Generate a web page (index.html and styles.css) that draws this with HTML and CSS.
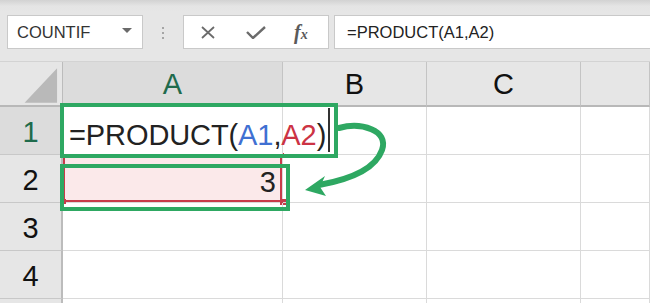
FILE: index.html
```html
<html>
<head>
    <title>PRODUCT</title>
    <link rel="stylesheet" href="styles.css">
</head>
<body>
    <div class="toolbar">
        <div class="namebox">
            <span>COUNTIF</span>
            <span class="caret"></span>
        </div>
        <div class="grip"><i></i><i></i><i></i></div>
        <div class="btnbox">
            <svg class="ico" width="16" height="13" viewBox="0 0 16 13">
                <path d="M2 1 L14 12 M14 1 L2 12" stroke="#6b6b6b" stroke-width="1.8" fill="none"/>
            </svg>
            <svg class="ico" width="20" height="13" viewBox="0 0 20 13">
                <path d="M1 6 L7 12 L19 1" stroke="#6b6b6b" stroke-width="2.4" fill="none"/>
            </svg>
            <span class="fx"><i>f</i><i class="x">x</i></span>
        </div>
        <div class="formula">=PRODUCT(A1,A2)</div>
    </div>

    <div class="sheet">
        <div class="corner">
            <svg width="63" height="44" viewBox="0 0 63 44">
                <polygon points="58,6 58,41 25,41" fill="#b9b9b9"/>
            </svg>
        </div>
        <div class="colhead sel">A</div>
        <div class="colhead">B</div>
        <div class="colhead">C</div>
        <div class="colhead"></div>

        <div class="rowhead sel">1</div>
        <div class="cell edit">=PRODUCT(<span class="ref1">A1</span>,<span class="ref2">A2</span>)<span class="cursor"></span></div>
        <div class="cell"></div>
        <div class="cell"></div>
        <div class="cell"></div>

        <div class="rowhead">2</div>
        <div class="cell num hl">3
            <span class="hd tl"></span><span class="hd tr"></span><span class="hd bl"></span><span class="hd br"></span>
        </div>
        <div class="cell"></div>
        <div class="cell"></div>
        <div class="cell"></div>

        <div class="rowhead">3</div>
        <div class="cell"></div>
        <div class="cell"></div>
        <div class="cell"></div>
        <div class="cell"></div>

        <div class="rowhead">4</div>
        <div class="cell"></div>
        <div class="cell"></div>
        <div class="cell"></div>
        <div class="cell"></div>

        <div class="rowhead"></div>
        <div class="cell"></div>
        <div class="cell"></div>
        <div class="cell"></div>
        <div class="cell"></div>

        <!-- callouts -->
        <div class="mark mark1"></div>
        <div class="mark mark2"></div>
        <svg class="arrow" width="100" height="90" viewBox="0 0 100 90">
            <path d="M48,16 C70,10 98,18 91,38 C84,58 56,68 28,73" stroke="#2ea862" stroke-width="6" fill="none" stroke-linecap="round"/>
            <polygon points="14,78 34,64 29,75 35,84" fill="#2ea862"/>
        </svg>
    </div>
</body>
</html>
```

FILE: styles.css
```css
html {
    font-family: "Liberation Sans", Arial, sans-serif;
    color: #222;
}

body {
    margin: 0;
    padding: 0;
    width: 650px;
    height: 303px;
    overflow: hidden;
    background: #fff;
}

.toolbar {
    height: 61px;
    box-sizing: border-box;
    padding: 15px 0 0 7px;
    display: flex;
    align-items: flex-start;
    background: linear-gradient(#d2d2d2 0px, #e4e4e4 6px, #e6e6e6 12px);
}

.namebox,
.btnbox,
.formula {
    height: 34px;
    box-sizing: border-box;
    border: 1px solid #c9c9c9;
    background: #fff;
    display: flex;
    align-items: center;
}

.namebox {
    width: 136px;
    padding: 0 0 0 9px;
    font-size: 16.5px;
    color: #333;
}

.caret {
    margin-left: auto;
    margin-right: 10px;
    border-left: 5px solid transparent;
    border-right: 5px solid transparent;
    border-top: 5px solid #6a6a6a;
    margin-top: -4px;
}

.grip {
    width: 40px;
    display: flex;
    flex-direction: column;
    align-items: center;
    gap: 3px;
    padding-top: 12px;
}

    .grip i {
        width: 2px;
        height: 2px;
        background: #a5a5a5;
    }

.btnbox {
    width: 146px;
    padding: 0 0 0 16px;
    gap: 30px;
}

.fx {
    font-family: "Liberation Serif", serif;
    font-size: 20px;
    font-weight: bold;
    color: #5a5a5a;
    margin-left: -2px;
}

    .fx .x {
        font-size: 14px;
    }

.formula {
    flex: 1;
    margin-left: 5px;
    margin-right: -2px;
    padding-left: 12px;
    font-size: 16.5px;
}

.sheet {
    position: relative;
    height: 242px;
    overflow: hidden;
    display: grid;
    grid-template-columns: 63px 220px 144px 154px 1fr;
    grid-template-rows: 45px;
    grid-auto-rows: 48px;
    border-top: 1px solid #d3d3d3;
    box-sizing: border-box;
}

.corner,
.colhead,
.rowhead {
    box-sizing: border-box;
    background: #e6e6e6;
    display: flex;
    align-items: center;
    justify-content: center;
    font-size: 29px;
    color: #111;
}

.corner {
    border-right: 1px solid #bcbcbc;
    border-bottom: 2px solid #b8b8b8;
    align-items: flex-start;
}

.colhead {
    border-right: 1px solid #c4c4c4;
    border-bottom: 2px solid #b8b8b8;
    padding-top: 2px;
}

.rowhead {
    border-right: 2px solid #bcbcbc;
    border-bottom: 1px solid #c8c8c8;
    padding-top: 4px;
}

    .colhead.sel,
    .rowhead.sel {
        background: #dcdcdc;
        color: #1f6b4c;
    }

.cell {
    position: relative;
    box-sizing: border-box;
    border-right: 1px solid #dadada;
    border-bottom: 1px solid #dadada;
    display: flex;
    align-items: flex-end;
    font-size: 29px;
    line-height: 29px;
    padding: 0 0 4px 6px;
    white-space: nowrap;
}

.edit {
    background: #fff;
    z-index: 1;
    letter-spacing: -0.1px;
}

.ref1 {
    color: #3f70d2;
}

.ref2 {
    color: #cc3344;
}

.cursor {
    flex-shrink: 0;
    width: 2px;
    height: 44px;
    background: #333;
    margin: 0 0 -2px 2px;
}

.num {
    justify-content: flex-end;
    padding: 0 6px 5px 0;
}

.hl {
    background: #fbe9ea;
    box-shadow: inset 0 0 0 2px #c83b4a;
}

.hd {
    position: absolute;
    width: 5px;
    height: 5px;
    background: #c83b4a;
}

    .hd.tl { left: -2px; top: -2px; }
    .hd.tr { right: -2px; top: -2px; }
    .hd.bl { left: -2px; bottom: -2px; }
    .hd.br { right: -4px; bottom: -3px; width: 6px; height: 6px; }

.mark {
    position: absolute;
    box-sizing: border-box;
    border: 4px solid #2ea862;
    z-index: 2;
}

.mark1 {
    left: 60px;
    top: 41px;
    width: 278px;
    height: 55px;
}

.mark2 {
    left: 60px;
    top: 102px;
    width: 230px;
    height: 47px;
}

.arrow {
    position: absolute;
    left: 291px;
    top: 50px;
    z-index: 2;
}
```
